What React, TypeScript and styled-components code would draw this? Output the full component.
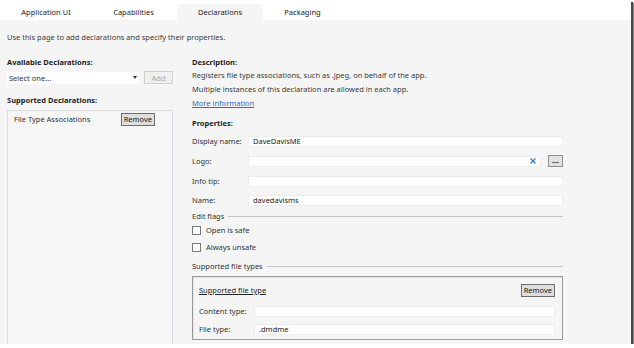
import React from 'react';
import styled, { createGlobalStyle } from 'styled-components';

const GlobalStyle = createGlobalStyle`
  html, body {
    margin: 0;
    padding: 0;
    background: #ffffff;
  }
  body {
    font-family: 'Noto Sans', 'Open Sans', sans-serif;
    font-size: 7.5px;
    color: #333333;
  }
`;

const Window = styled.div`
  width: 631px;
  height: 344px;
  display: flex;
  flex-direction: column;
  background: #f5f5f5;
  box-shadow: 2px 2px 0 #4a4a4a, 3px 3px 1px #888888;
  overflow: hidden;
`;

const TabBar = styled.div`
  height: 20px;
  display: flex;
  align-items: flex-end;
  padding-left: 2px;
  background: #ffffff;
`;

const Tab = styled.div<{ $active?: boolean; $width: number }>`
  width: ${({ $width }) => $width}px;
  height: 16px;
  display: flex;
  align-items: center;
  justify-content: center;
  color: #222222;
  background: ${({ $active }) => ($active ? '#f5f5f5' : 'transparent')};
`;

const Body = styled.div`
  flex: 1;
  display: flex;
  flex-direction: column;
  padding: 0 0 0 7px;
  min-height: 0;
`;

const Intro = styled.div`
  height: 14px;
  line-height: 14px;
  margin-top: 10px;
  color: #3a3a3a;
`;

const Columns = styled.div`
  flex: 1;
  display: flex;
  gap: 19px;
  margin-top: 12px;
  min-height: 0;
`;

const LeftColumn = styled.div`
  width: 166px;
  display: flex;
  flex-direction: column;
`;

const RightColumn = styled.div`
  width: 371px;
  display: flex;
  flex-direction: column;
`;

const Heading = styled.div<{ $top?: number }>`
  height: 12px;
  line-height: 12px;
  font-weight: 700;
  color: #1e1e1e;
  margin-top: ${({ $top }) => $top ?? 0}px;
`;

const SelectRow = styled.div`
  display: flex;
  align-items: center;
  gap: 4px;
  margin-top: 3px;
`;

const Select = styled.div`
  width: 133px;
  height: 12px;
  display: flex;
  align-items: center;
  justify-content: space-between;
  padding: 0 3px 0 2px;
  box-sizing: border-box;
  background: #ffffff;
  color: #333333;
`;

const Arrow = styled.span`
  width: 0;
  height: 0;
  border-left: 2px solid transparent;
  border-right: 2px solid transparent;
  border-top: 3px solid #333333;
`;

const Button = styled.div<{ $disabled?: boolean }>`
  height: 13px;
  padding: 0 2px;
  display: flex;
  align-items: center;
  justify-content: center;
  box-sizing: border-box;
  border: 1px solid ${({ $disabled }) => ($disabled ? '#cfcfcf' : '#6e6e6e')};
  background: ${({ $disabled }) => ($disabled ? '#f0f0f0' : '#dedede')};
  color: ${({ $disabled }) => ($disabled ? '#a8a8a8' : '#1a1a1a')};
`;

const AddButton = styled(Button)`
  width: 29px;
`;

const ListBox = styled.div`
  flex: 1;
  margin-top: 4px;
  border: 1px solid #dcdce4;
  border-bottom: none;
  background: #f6f6f6;
`;

const ListItem = styled.div`
  height: 14px;
  margin-top: 1px;
  display: flex;
  align-items: center;
  justify-content: space-between;
  padding: 0 17px 0 6px;
`;

const Text = styled.div`
  height: 14px;
  line-height: 14px;
  color: #3a3a3a;
`;

const Link = styled.a`
  height: 14px;
  line-height: 14px;
  color: #2f6fc0;
  text-decoration: underline;
`;

const FieldRow = styled.div<{ $top: number }>`
  display: flex;
  align-items: center;
  height: 12px;
  margin-top: ${({ $top }) => $top}px;
`;

const Label = styled.div<{ $width: number }>`
  width: ${({ $width }) => $width}px;
  flex-shrink: 0;
  white-space: nowrap;
  color: #333333;
`;

const Input = styled.div`
  flex: 1;
  height: 11px;
  display: flex;
  align-items: center;
  justify-content: space-between;
  padding: 0 4px;
  box-sizing: border-box;
  background: #ffffff;
  border: 1px solid #ededed;
  color: #222222;
`;

const ClearIcon = styled.svg`
  width: 6px;
  height: 6px;
`;

const BrowseButton = styled.div`
  width: 15px;
  height: 12px;
  margin-left: 7px;
  box-sizing: border-box;
  border: 1px solid #8e8e8e;
  background: #e2e2e2;
  display: flex;
  align-items: flex-end;
  justify-content: center;
  padding-bottom: 3px;
`;

const Dash = styled.span`
  width: 7px;
  height: 1px;
  background: #666666;
`;

const GroupTitle = styled.div<{ $top: number }>`
  display: flex;
  align-items: center;
  gap: 4px;
  height: 12px;
  margin-top: ${({ $top }) => $top}px;
  color: #333333;

  &::after {
    content: '';
    flex: 1;
    height: 1px;
    background: #c4c4c4;
  }
`;

const CheckRow = styled.div<{ $top: number }>`
  display: flex;
  align-items: center;
  gap: 5px;
  height: 12px;
  margin-top: ${({ $top }) => $top}px;
`;

const CheckBox = styled.span`
  width: 9px;
  height: 9px;
  box-sizing: border-box;
  border: 1px solid #7a7a7a;
  background: #ffffff;
`;

const FileTypeBox = styled.div`
  margin-top: 4px;
  height: 64px;
  box-sizing: border-box;
  border: 1px solid #9a9a9a;
  box-shadow: inset 1px 1px 0 #e4e4e4;
  padding: 6px 7px 0 6px;
  display: flex;
  flex-direction: column;
`;

const BoxHeader = styled.div`
  display: flex;
  align-items: center;
  justify-content: space-between;
  height: 14px;
`;

const Underlined = styled.span`
  text-decoration: underline;
  color: #222222;
`;

export default function App() {
  return (
    <>
      <GlobalStyle />
      <Window>
        <TabBar>
          <Tab $width={88}>Application UI</Tab>
          <Tab $width={87}>Capabilities</Tab>
          <Tab $width={86} $active>Declarations</Tab>
          <Tab $width={79}>Packaging</Tab>
        </TabBar>
        <Body>
          <Intro>Use this page to add declarations and specify their properties.</Intro>
          <Columns>
            <LeftColumn>
              <Heading>Available Declarations:</Heading>
              <SelectRow>
                <Select>
                  <span>Select one...</span>
                  <Arrow />
                </Select>
                <AddButton $disabled>Add</AddButton>
              </SelectRow>
              <Heading $top={10}>Supported Declarations:</Heading>
              <ListBox>
                <ListItem>
                  <span>File Type Associations</span>
                  <Button>Remove</Button>
                </ListItem>
              </ListBox>
            </LeftColumn>
            <RightColumn>
              <Heading>Description:</Heading>
              <Text>Registers file type associations, such as .jpeg, on behalf of the app.</Text>
              <Text>Multiple instances of this declaration are allowed in each app.</Text>
              <Link>More information</Link>
              <Heading $top={7}>Properties:</Heading>
              <FieldRow $top={6}>
                <Label $width={56}>Display name:</Label>
                <Input>DaveDavisME</Input>
              </FieldRow>
              <FieldRow $top={8}>
                <Label $width={56}>Logo:</Label>
                <Input>
                  <span />
                  <ClearIcon viewBox="0 0 6 6">
                    <path d="M0.5 0.5 L5.5 5.5 M5.5 0.5 L0.5 5.5" stroke="#3b7fd4" strokeWidth="1.4" />
                  </ClearIcon>
                </Input>
                <BrowseButton>
                  <Dash />
                </BrowseButton>
              </FieldRow>
              <FieldRow $top={8}>
                <Label $width={56}>Info tip:</Label>
                <Input />
              </FieldRow>
              <FieldRow $top={7}>
                <Label $width={56}>Name:</Label>
                <Input>davedavisms</Input>
              </FieldRow>
              <GroupTitle $top={4}>Edit flags</GroupTitle>
              <CheckRow $top={2}>
                <CheckBox />
                <span>Open is safe</span>
              </CheckRow>
              <CheckRow $top={5}>
                <CheckBox />
                <span>Always unsafe</span>
              </CheckRow>
              <GroupTitle $top={7}>Supported file types</GroupTitle>
              <FileTypeBox>
                <BoxHeader>
                  <Underlined>Supported file type</Underlined>
                  <Button>Remove</Button>
                </BoxHeader>
                <FieldRow $top={8}>
                  <Label $width={55}>Content type:</Label>
                  <Input />
                </FieldRow>
                <FieldRow $top={6}>
                  <Label $width={55}>File type:</Label>
                  <Input>.dmdme</Input>
                </FieldRow>
              </FileTypeBox>
            </RightColumn>
          </Columns>
        </Body>
      </Window>
    </>
  );
}
